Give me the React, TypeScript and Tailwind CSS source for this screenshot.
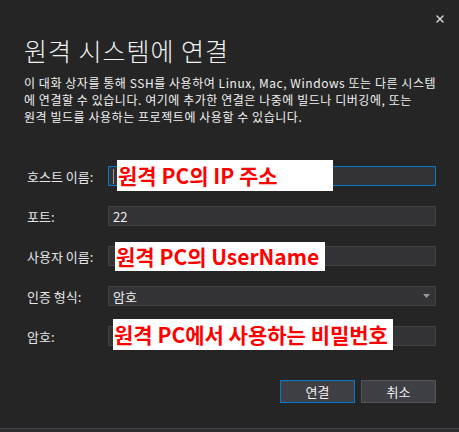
import { X } from "lucide-react";

const font = { fontFamily: '"Noto Sans CJK KR", "Noto Sans", sans-serif' };

interface RowProps {
  label: string;
  value?: string;
  focused?: boolean;
  select?: boolean;
  note?: string;
  noteClass?: string;
}

function FormRow({ label, value, focused, select, note, noteClass }: RowProps) {
  return (
    <div className="relative flex items-center h-5">
      <div className="w-[81px] text-[13px] text-[#e6e6e6] leading-none">{label}</div>
      <div
        className={
          "flex-1 h-5 flex items-center px-[4px] bg-[#333337] border " +
          (focused ? "border-[#007acc]" : "border-[#434346]")
        }
      >
        {focused && <span className="w-px h-[15px] bg-[#9a9a9a]" />}
        <span className="flex-1 text-[13px] text-[#f1f1f1] leading-none">{value}</span>
        {select && (
          <svg width="7" height="4" viewBox="0 0 7 4" className="mr-[1px]">
            <path d="M0 0h7L3.5 4z" fill="#999999" />
          </svg>
        )}
      </div>
      {/* annotation boxes pasted over the screenshot */}
      {note && (
        <div
          className={
            "absolute flex items-center bg-white text-[#ff0000] font-bold text-[21px] leading-none pl-[1px] " +
            noteClass
          }
        >
          {note}
        </div>
      )}
    </div>
  );
}

export default function App() {
  return (
    <div className="w-[459px] h-[432px] bg-[#252526] flex flex-col overflow-hidden" style={font}>
      <div className="flex justify-end pt-[13px] pr-[13px] h-[34px]">
        <X size={12} strokeWidth={3} className="text-[#d0d0d0]" />
      </div>

      <div className="px-6">
        <h1 className="text-[25px] font-light text-[#f1f1f1] leading-8 tracking-[1px]">원격 시스템에 연결</h1>
        <p className="mt-[8px] text-[12px] leading-[17px] text-[#f1f1f1] tracking-[0.55px] whitespace-nowrap">
          이 대화 상자를 통해 SSH를 사용하여 Linux, Mac, Windows 또는 다른 시스템
          <br />
          에 연결할 수 있습니다. 여기에 추가한 연결은 나중에 빌드나 디버깅에, 또는
          <br />
          원격 빌드를 사용하는 프로젝트에 사용할 수 있습니다.
        </p>
      </div>

      <div className="mt-[41px] pl-[27px] pr-[23px] flex flex-col gap-5">
        <FormRow
          label="호스트 이름:"
          focused
          note="원격 PC의 IP 주소"
          noteClass="left-[90px] top-[-6px] w-[216px] h-[31px]"
        />
        <FormRow label="포트:" value="22" />
        <FormRow
          label="사용자 이름:"
          note="원격 PC의 UserName"
          noteClass="left-[88px] top-[-4px] w-[210px] h-[29px]"
        />
        <FormRow label="인증 형식:" value="암호" select />
        <FormRow
          label="암호:"
          note="원격 PC에서 사용하는 비밀번호"
          noteClass="left-[86px] top-[-7px] w-[280px] h-[31px]"
        />
      </div>

      <div className="mt-[34px] pr-[23px] flex justify-end gap-[6px]">
        <button className="w-[75px] h-[23px] bg-[#3f3f46] border border-[#007acc] text-[13px] text-[#f1f1f1]">
          연결
        </button>
        <button className="w-[75px] h-[23px] bg-[#3f3f46] border border-[#555555] text-[13px] text-[#f1f1f1]">
          취소
        </button>
      </div>

      <div className="flex-1" />
      <div className="h-px bg-[#3f3f46]" />
      <div className="h-[3px] bg-[#2d2d30]" />
    </div>
  );
}
